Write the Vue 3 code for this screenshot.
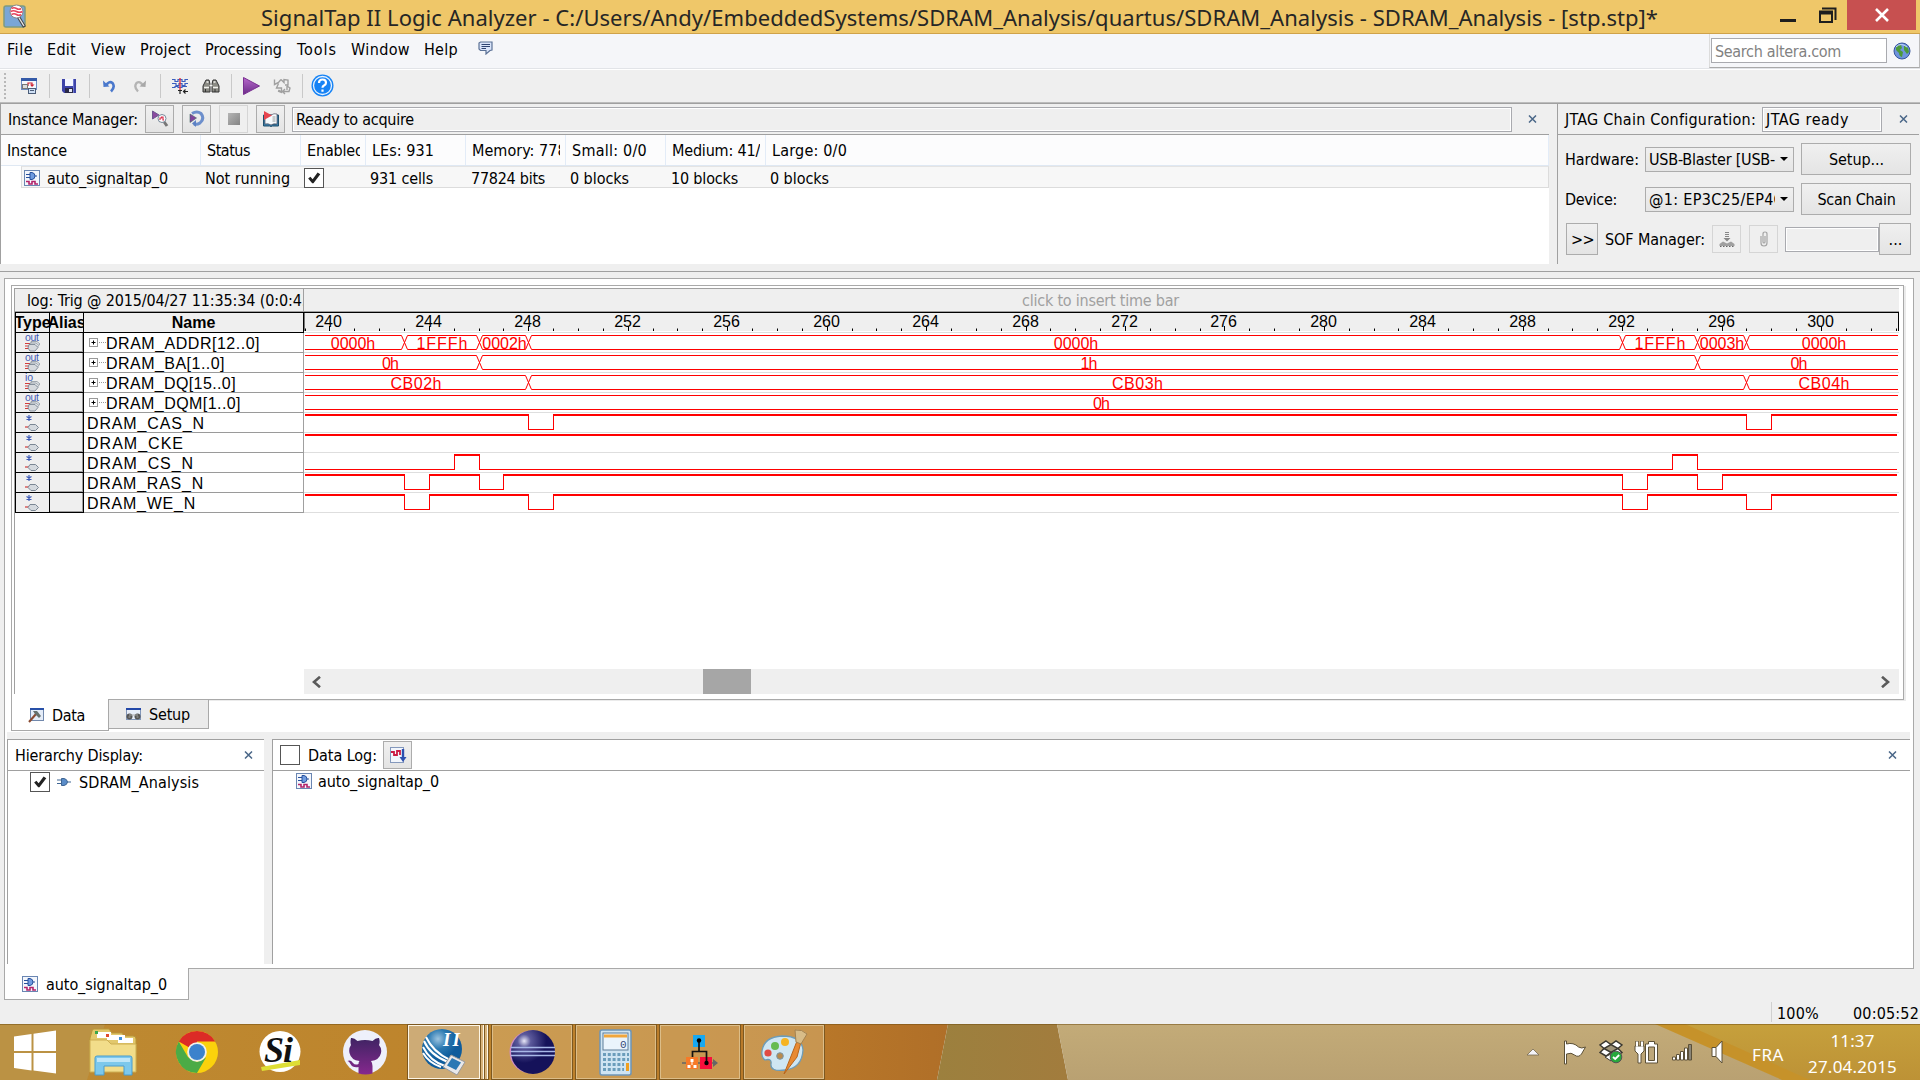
<script setup>
// Stretches or tightens the letter spacing so a label has a given drawn width.
const vFit = {
  mounted(el, { value }) {
    const natural = el.getBoundingClientRect().width
    const target = value + 2
    el.style.letterSpacing = `${(target - natural) / el.textContent.length}px`
    el.style.width = `${target}px`
  },
}

const menus = [
  ['File', 24], ['Edit', 27], ['View', 33], ['Project', 49],
  ['Processing', 75], ['Tools', 38], ['Window', 57], ['Help', 32],
]

const columns = [
  ['Instance', 59], ['Status', 42], ['Enabled', 56], ['LEs: 931', 61],
  ['Memory: 77824', 112], ['Small: 0/0', 74], ['Medium: 41/66', 105], ['Large: 0/0', 74],
]

const signals = [
  { name: 'DRAM_ADDR[12..0]', w: 152, kind: 'out', cuts: [243, 246, 248, 292, 295, 297],
    labels: [['0000h', 353], ['1FFFh', 442], ['0002h', 504.5], ['0000h', 1076], ['1FFFh', 1660], ['0003h', 1722], ['0000h', 1824]] },
  { name: 'DRAM_BA[1..0]', w: 117, kind: 'out', cuts: [246, 295],
    labels: [['0h', 390.5], ['1h', 1089], ['0h', 1799]] },
  { name: 'DRAM_DQ[15..0]', w: 128, kind: 'io', cuts: [248, 297],
    labels: [['CB02h', 416], ['CB03h', 1137.5], ['CB04h', 1824]] },
  { name: 'DRAM_DQM[1..0]', w: 133, kind: 'out', cuts: [], labels: [['0h', 1101.5]] },
  { name: 'DRAM_CAS_N', w: 116, high: true, cuts: [248, 249, 297, 298] },
  { name: 'DRAM_CKE', w: 95, high: true, cuts: [] },
  { name: 'DRAM_CS_N', w: 105, high: false, cuts: [245, 246, 294, 295] },
  { name: 'DRAM_RAS_N', w: 115, high: true, cuts: [243, 244, 246, 247, 292, 293, 295, 296] },
  { name: 'DRAM_WE_N', w: 107, high: true, cuts: [243, 244, 248, 249, 292, 293, 297, 298] },
]

const LEFT = 304
const END = 1594
const at = (t) => Math.floor(329.95 + (t - 240) * 24.86) - LEFT

const ticks = []
for (let t = 239; t <= 303; t++) ticks.push({ t, x: at(t), major: t % 4 === 0 })

const rowY = (i) => 20 + i * 20

function busPath(s, i) {
  const top = rowY(i) + 2.5
  const bot = rowY(i) + 16.5
  let d = ''
  let from = 1
  for (const c of [...s.cuts, null]) {
    const x = c === null ? END + 3 : at(c) + 0.5
    d += `M${from} ${top}H${x - 3}M${from} ${bot}H${x - 3}`
    if (c !== null) d += `M${x - 3} ${top}L${x + 3} ${bot}M${x - 3} ${bot}L${x + 3} ${top}`
    from = x + 3
  }
  return d
}

function bitPaths(s, i) {
  let level = s.high
  let from = 1
  let hi = ''
  let lo = ''
  for (const c of [...s.cuts, null]) {
    const x = c === null ? END - 1 : at(c)
    if (level) hi += `M${from} ${rowY(i) + 2}H${x + (c === null ? 0 : 1)}`
    else lo += `M${from} ${rowY(i) + 16.5}H${x}`
    if (c !== null) lo += `M${x + 0.5} ${rowY(i) + 2}V${rowY(i) + 17}`
    from = x
    level = !level
  }
  return { hi, lo }
}

const waves = signals.map((s, i) => (s.kind ? { bus: busPath(s, i) } : bitPaths(s, i)))
const labelWidth = { 2: 17, 5: 44.5 }
const widthOf = (txt) => (/[CF]/.test(txt) ? 51 : labelWidth[txt.length])
</script>

<template>
  <div class="screen">
    <svg class="defs" width="0" height="0">
      <symbol id="tap" viewBox="0 0 16 16">
        <rect x=".5" y=".5" width="15" height="15" fill="#f3f6fc" stroke="#6a86b2" />
        <path d="M2 4.500h4M2 7.500h4M10 6h3" stroke="#27509c" />
        <path d="M6 2.500h2q3 .5 3 3.500T8 9.500H6z" fill="#6f9be0" stroke="#27509c" />
        <path d="M2 11.500h3v2.500h3v-2.500h3v2.500h3" fill="none" stroke="#b3246a" stroke-width="1.600" />
      </symbol>
      <symbol id="cross" viewBox="0 0 9 8">
        <path d="M1 .5 8 7.500M8 .5 1 7.500" stroke="#4a6788" stroke-width="1.500" />
      </symbol>
      <symbol id="check" viewBox="0 0 20 20">
        <path d="M3.500 10.500 6 8.500 8.500 11.500 14 4l3 1.700-7.600 10.200H8z" fill="#222" />
      </symbol>
      <symbol id="pin" viewBox="0 0 18 16">
        <path d="M1 10h4" stroke="#d23a3a" stroke-width="1.200" />
        <path d="M6 7.500h5.500l3 3-3 3H7l-3-3z" fill="#d4d9de" stroke="#7b8794" />
      </symbol>
      <symbol id="bus" viewBox="0 0 18 18">
        <path d="M1 9.500h5M1 12h4M1 14.500h4" stroke="#d23a3a" />
        <path d="M7 7.500h6l3 2.500-3 3H8z" fill="#e2e5e8" stroke="#8c959f" stroke-width=".8" />
        <path d="M6 9h6l3 2.500-3 3H7z" fill="#e2e5e8" stroke="#8c959f" stroke-width=".8" />
        <path d="M5 10.500h6l3 3-3 3.500H6l-2-3z" fill="#d6dade" stroke="#7b8794" stroke-width=".9" />
      </symbol>
    </svg>

    <header class="title">
      <svg class="appicon" width="24" height="26" viewBox="0 0 24 26">
        <rect x="1" y="2" width="21" height="21" rx="2" fill="#7aa6d6" stroke="#7f9a80" stroke-width="1.500" />
        <path d="m15.500 13 6 10" stroke="#444" stroke-width="3.400" /><path d="m15.500 13 5.500 9" stroke="#e8e8e8" stroke-width="1.400" />
        <circle cx="13.500" cy="7.500" r="6.500" fill="#fff" stroke="#888" />
        <path d="M8.500 4.500q2.500-1.500 5 0t4.500 0M7.500 7.500q3-1.500 6 0t6 0M8.500 10.500q2.500-1.500 5 0t4.500 0" fill="none" stroke="#e5455d" stroke-width="1.600" />
      </svg>
      <span v-fit="1395" class="caption">SignalTap II Logic Analyzer - C:/Users/Andy/EmbeddedSystems/SDRAM_Analysis/quartus/SDRAM_Analysis - SDRAM_Analysis - [stp.stp]*</span>
      <svg class="winbtn" width="60" height="30" viewBox="0 0 60 30">
        <path d="M2 20.500h16" stroke="#1e1e1e" stroke-width="3" />
        <path d="M44 8.500h13.500V20" fill="none" stroke="#1e1e1e" stroke-width="2" />
        <path d="M42 13v9h12v-9z" fill="none" stroke="#1e1e1e" stroke-width="2" />
        <path d="M41 12.500h14" stroke="#1e1e1e" stroke-width="4" />
      </svg>
      <span class="closewin">
        <svg width="16" height="14" viewBox="0 0 16 14"><path d="M2 1l12 12M14 1 2 13" stroke="#fff" stroke-width="2.600" /></svg>
      </span>
    </header>

    <nav class="menu">
      <span v-for="m in menus" :key="m[0]" v-fit="m[1]" class="t">{{ m[0] }}</span>
      <svg class="bubble" width="15" height="14" viewBox="0 0 15 14">
        <path d="M2.500 1h11.500v8l-2 .5-4 3.500V9.500H2.500L1 8V2z" fill="#d9e4fa" stroke="#5c7296" stroke-width="1.200" />
        <path d="M3.500 3.500H12M3.500 5.500H12M3.500 7.500H8" stroke="#2d4370" />
      </svg>
      <div class="searchbox">
        <div class="field search"><span v-fit="125" class="t">Search altera.com</span></div>
        <svg width="18" height="18" viewBox="0 0 18 18">
          <circle cx="9" cy="9" r="8" fill="#6e94dc" stroke="#35549c" />
          <path d="M3 5q3-3 5-2l1 3-2 2 3 2-1 5q-3-1-3-4L3 8zM11 3l4 3 1 4-2 2-3-4z" fill="#4c9a3a" />
          <path d="M3 5q5-5 11 0" stroke="#c7dbff" fill="none" />
        </svg>
      </div>
    </nav>

    <div class="toolbar">
      <i class="grip"></i>
      <svg width="18" height="18" viewBox="0 0 18 18">
        <rect x="1.500" y="1.500" width="15" height="11" fill="#f5f8fd" stroke="#6f8cc4" />
        <path d="M1 2.500h16" stroke="#345aa8" stroke-width="3" />
        <path d="M8 9V6h4v3" fill="none" stroke="#d02030" stroke-width="1.200" /><path d="m10 7.500 2 2.500L14.500 7.500z" fill="#d02030" />
        <rect x="2.500" y="7.500" width="5" height="4" fill="#ddd" stroke="#777" />
        <rect x="8.500" y="11.500" width="7" height="5" fill="#cfe0f5" stroke="#4b5d78" /><path d="M10 13.500h4" stroke="#4b5d78" />
      </svg>
      <i class="sep"></i>
      <svg width="16" height="16" viewBox="0 0 16 16">
        <path d="M1 1h14v14H3l-2-2z" fill="#3e44a8" />
        <rect x="4" y="1" width="8" height="7" fill="#f4f6ff" /><rect x="4" y="10" width="8" height="5" fill="#2a2a48" /><rect x="8" y="11" width="3" height="3" fill="#e6e8f6" />
        <path d="M12.500 1v14" stroke="#6d78d0" />
      </svg>
      <i class="sep"></i>
      <svg width="14" height="14" viewBox="0 0 14 14">
        <path d="M4 6.500q3-5 6.500-2.500 3 4-1.500 8.500" fill="none" stroke="#4a78cc" stroke-width="2.600" /><path d="M1 1.500 1.500 8l6-.5z" fill="#4a78cc" />
      </svg>
      <svg width="14" height="14" viewBox="0 0 14 14">
        <path d="M10 6.500q-3-5-6.500-2.500-3 4 1.500 8.500" fill="none" stroke="#b4b4b4" stroke-width="2.300" /><path d="M13 1.500 12.500 8l-6-.5z" fill="#a8a8a8" />
      </svg>
      <i class="sep"></i>
      <svg width="18" height="18" viewBox="0 0 18 18">
        <path d="M1 2.500h3v2h3v-2h4v2h3v-2h3M1 6.500h4v2h3v-2h3v2h3v-2h3M1 10.500h3v-1h3v1h4v-1h5" fill="none" stroke="#3a5ec0" stroke-width="1.200" />
        <path d="M9 1v12" stroke="#e03040" stroke-width="1.400" />
        <path d="M7 13.500h4M9 13v4M12.500 14.500H17M14.500 12.500l-2 2 2 2" stroke="#222" fill="none" stroke-width="1.200" />
      </svg>
      <svg width="18" height="18" viewBox="0 0 18 18">
        <path d="M4 3h3l1 4v8H1V9zM11 3h3l3 6v6h-7V7z" fill="#8b8b84" stroke="#333" />
        <path d="M2 10.500h5M11 10.500h5M4.500 5h2M11.500 5h2M7.500 8.500h3" stroke="#f2f2ee" stroke-width="1.500" /><path d="M3.500 12v3M13 12v3" stroke="#333" />
      </svg>
      <i class="sep"></i>
      <svg width="18" height="20" viewBox="0 0 18 20">
        <path d="M1.500 1.500v17L17.500 10z" fill="url(#play)" stroke="#7a2f92" />
        <linearGradient id="play" x2="0" y2="1"><stop stop-color="#b868cc" /><stop offset="1" stop-color="#6a2c88" /></linearGradient>
      </svg>
      <svg width="18" height="18" viewBox="0 0 18 18" fill="none" stroke="#a0a0a0" stroke-width="1.400">
        <path d="M1.500 2.500v5l4-2 2.500-3M8 2.500l3 3v-3l4 .5v5h-3M5.500 6.500l-2 4.500h5v4l-3-2M9 15.500 5 14M10 14.500h6l1-3.500-3-2M12 12l-2.500 2.500L12 17M14 9v4" />
      </svg>
      <i class="sep"></i>
      <svg width="23" height="23" viewBox="0 0 23 23">
        <circle cx="11.500" cy="11.500" r="11" fill="#1683f5" /><circle cx="11.500" cy="11.500" r="9" fill="none" stroke="#e8f3ff" stroke-width="1.300" />
        <path d="M8 9q0-3.500 3.500-3.500T15 8.800Q15 10.500 13 11.500q-1.500.8-1.500 2.200M11.500 15.500v2.200" fill="none" stroke="#fff" stroke-width="2.200" />
      </svg>
    </div>

    <div class="docks">
      <section class="dock instance">
        <div class="head ihead">
          <span v-fit="129" class="t">Instance Manager:</span>
          <b class="btn"><svg width="18" height="18" viewBox="0 0 18 18">
            <path d="M1.500 1v8L8 5z" fill="#8c4aa0" stroke="#6d5590" /><path d="m12.500 11 3.500 5" stroke="#777" stroke-width="3" /><circle cx="11" cy="8.500" r="4" fill="#fff" stroke="#789" /><path d="M9 10V8h1.500V7H12v3h1" fill="none" stroke="#d8304c" stroke-width="1.200" />
          </svg></b>
          <b class="btn"><svg width="18" height="18" viewBox="0 0 18 18">
            <path d="M4 3.500q5-3 9 0 4 5-1 9.500-3 2-6 1" fill="none" stroke="#6d8fcc" stroke-width="3" /><path d="m8 10-4 3.500L8 17z" fill="#5b80c4" /><path d="M2 4v8.500L8.500 8z" fill="#83439c" stroke="#466" stroke-width=".6" />
          </svg></b>
          <b class="btn off"><i class="stop"></i></b>
          <b class="btn"><svg width="18" height="18" viewBox="0 0 18 18">
            <path d="M1.500 5v11h6q1.500 0 1.500 1 0-1 1.500-1h6V5h-2v9H10V5z" fill="#3a7ca8" stroke="#20506e" /><path d="M9 5q3-2 6-1v10q-3-1-6 1-3-2-6-1V5q3-1 6 0z" fill="#f5fafd" stroke="#556" stroke-width=".7" /><path d="M10.500 7h3M10.500 9h3M10.500 11h3" stroke="#999" /><path d="M2 1v9l8-4.500z" fill="#e8454f" />
          </svg></b>
          <div class="field ready"><span v-fit="117" class="t">Ready to acquire</span></div>
          <svg class="x" width="9" height="8"><use href="#cross" /></svg>
        </div>
        <div class="cols">
          <div v-for="c in columns" :key="c[0]" class="col"><span><span v-fit="c[1]" class="t">{{ c[0] }}</span></span></div>
        </div>
        <div class="irow">
          <svg width="16" height="16"><use href="#tap" /></svg>
          <span v-fit="120" class="t">auto_signaltap_0</span>
          <span v-fit="84" class="t">Not running</span>
          <i class="box"><svg width="18" height="18"><use href="#check" /></svg></i>
          <span v-fit="62" class="t">931 cells</span>
          <span v-fit="73" class="t">77824 bits</span>
          <span v-fit="58" class="t">0 blocks</span>
          <span v-fit="66" class="t">10 blocks</span>
          <span v-fit="58" class="t">0 blocks</span>
        </div>
      </section>

      <section class="dock jtag">
        <div class="head jhead">
          <span v-fit="190" class="t">JTAG Chain Configuration:</span>
          <div class="field"><span v-fit="82" class="t">JTAG ready</span></div>
          <svg class="x" width="9" height="8"><use href="#cross" /></svg>
        </div>
        <div class="jrow">
          <span v-fit="73" class="t">Hardware:</span>
          <div class="select"><p><span v-fit="125" class="t">USB-Blaster [USB-</span></p><i></i></div>
          <b class="btn wide"><span v-fit="54" class="t">Setup...</span></b>
        </div>
        <div class="jrow">
          <span v-fit="51" class="t">Device:</span>
          <div class="select"><p><span v-fit="134" class="t">@1: EP3C25/EP4C</span></p><i></i></div>
          <b class="btn wide"><span v-fit="77" class="t">Scan Chain</span></b>
        </div>
        <div class="jrow sof">
          <b class="btn wide"><span v-fit="22" class="t">&gt;&gt;</span></b>
          <span v-fit="99" class="t">SOF Manager:</span>
          <b class="btn off"><svg width="18" height="18" viewBox="0 0 18 18">
            <path d="M7 2.500h4M7 4.500h4M7 6.500h4" stroke="#888" /><path d="M5.500 8h7L9 11.500z" fill="#888" /><path d="M5 11.500 1.500 14v2h15v-2L13 11.500l-4 2z" fill="#a0a0a0" /><path d="M2 16.500h14" stroke="#666" stroke-dasharray="1.500 1.500" />
          </svg></b>
          <b class="btn off"><svg width="10" height="16" viewBox="0 0 10 16"><path d="M2 5v7q0 3 3 3t3-3V3q0-2-2-2T4 3v8q0 1 1 1t1-1V5" fill="none" stroke="#a4a4a4" stroke-width="1.200" /></svg></b>
          <div class="field"></div>
          <b class="btn wide"><span v-fit="13" class="t">...</span></b>
        </div>
      </section>
    </div>

    <div class="rule"></div>

    <main class="mdi">
      <section class="tabpage">
        <div class="view">
          <div class="logbar">
            <div class="log"><span v-fit="287" class="t">log: Trig @ 2015/04/27 11:35:34 (0:0:4.0 </span></div>
            <div class="insert"><span v-fit="156" class="t">click to insert time bar</span></div>
          </div>
          <div class="grid">
            <div class="names">
              <div class="nrow nhead"><div>Type</div><div>Alias</div><div>Name</div></div>
              <div v-for="s in signals" :key="s.name" class="nrow">
                <div class="type">
                  <svg v-if="s.kind" width="18" height="19" viewBox="0 0 18 19">
                    <text x="1" y="8" font-size="10.500" fill="#3f5bb5" :textLength="s.kind === 'io' ? 8 : 14">{{ s.kind }}</text>
                    <use href="#bus" y="1" width="18" height="18" />
                  </svg>
                  <svg v-else width="18" height="19" viewBox="0 0 18 19">
                    <path d="M5 2v6M2.500 3.500l5 3M7.500 3.500l-5 3" stroke="#3f5bb5" stroke-width="1.200" />
                    <use href="#pin" y="4" width="18" height="16" />
                  </svg>
                </div>
                <div class="alias"></div>
                <div class="name">
                  <svg v-if="s.kind" width="17" height="9" viewBox="0 0 17 9">
                    <rect x=".5" y=".5" width="8" height="8" fill="#fff" stroke="#999" /><path d="M2.500 4.500h4M4.500 2.500v4" stroke="#000" /><path d="M10 4.500h7" stroke="#999" stroke-dasharray="1 1" />
                  </svg>
                  <span v-fit="s.w" class="sig">{{ s.name }}</span>
                </div>
              </div>
            </div>
            <svg class="wave" width="1595" height="200" viewBox="0 0 1595 200">
              <rect width="1595" height="18" fill="#efefef" />
              <path d="M0 0V18M1594.500 0V18" stroke="#000" />
              <path v-for="t in ticks" :key="t.t" :d="`M${t.x + 0.5} ${t.major ? 13 : 15.500}V18`" stroke="#000" />
              <text v-for="t in ticks.filter((k) => k.major)" :key="'l' + t.t" :x="t.x - 0.5" y="14" class="tick">{{ t.t }}</text>
              <path v-for="n in 10" :key="'g' + n" :d="`M0 ${n * 20 - 0.5}H1595`" stroke="#dedede" />
              <g fill="none" stroke="#f00">
                <template v-for="(w, i) in waves" :key="i">
                  <path v-if="w.bus" :d="w.bus" />
                  <template v-else><path :d="w.hi" stroke-width="2" /><path :d="w.lo" /></template>
                </template>
              </g>
              <template v-for="(s, i) in signals" :key="s.name">
                <text v-for="(l, j) in s.labels || []" :key="j" :x="l[1] - LEFT" :y="rowY(i) + 16" class="val" :textLength="widthOf(l[0])">{{ l[0] }}</text>
              </template>
            </svg>
          </div>
          <div class="scroll">
            <svg width="11" height="12" viewBox="0 0 11 12"><path d="M9 .8 3 6l6 5.200" fill="none" stroke="#5a5a5a" stroke-width="2.600" /></svg>
            <i></i>
            <svg width="11" height="12" viewBox="0 0 11 12"><path d="M2 .8 8 6l-6 5.200" fill="none" stroke="#5a5a5a" stroke-width="2.600" /></svg>
          </div>
        </div>
      </section>
      <div class="tabs">
        <div class="tab on">
          <svg width="16" height="16" viewBox="0 0 16 16"><rect x="2.500" y="1.500" width="13" height="12" fill="#e4ecf8" stroke="#7188ac" /><path d="M2 2h14" stroke="#2850a8" stroke-width="2" /><path d="m1 15 7-8" stroke="#8a4a30" stroke-width="2" /><path d="M5 4h4l4 5-2 2-4-4z" fill="#65706c" /></svg>
          <span v-fit="32" class="t">Data</span>
        </div>
        <div class="tab">
          <svg width="17" height="14" viewBox="0 0 17 14"><rect x="1.500" y="1.500" width="14" height="11" fill="#e8eefa" stroke="#8296b8" /><path d="M1 2h15" stroke="#2348a8" stroke-width="2" /><circle cx="4.500" cy="9.500" r="3" fill="#555" /><circle cx="12.500" cy="9.500" r="3" fill="#555" /><path d="M4 8h9M3.500 10h2M11.500 10h2" stroke="#aaa" /></svg>
          <span v-fit="40" class="t">Setup</span>
        </div>
      </div>
      <div class="lower">
        <section class="pane hier">
          <div class="phead"><span v-fit="127" class="t">Hierarchy Display:</span><svg class="x" width="9" height="8"><use href="#cross" /></svg></div>
          <div class="tree">
            <i class="box"><svg width="18" height="18"><use href="#check" /></svg></i>
            <svg width="14" height="10" viewBox="0 0 14 10"><path d="M0 3h5M0 6.500h5M9 5h5" stroke="#3f6694" stroke-width="1.200" /><path d="M4.500 1.500H7Q10 2 10.500 5 10 8 7 8.500H4.500z" fill="#5a8cc8" stroke="#3f6694" /></svg>
            <span v-fit="119" class="t">SDRAM_Analysis</span>
          </div>
        </section>
        <section class="pane dlog">
          <div class="phead">
            <i class="box"></i><span v-fit="68" class="t">Data Log:</span>
            <b class="btn"><svg width="18" height="18" viewBox="0 0 18 18"><rect x="1.500" y="1.500" width="13" height="15" fill="#f2f6fc" stroke="#8498bc" /><path d="M2 6h3v3h3V5h3v4" fill="none" stroke="#cc1c44" stroke-width="1.800" /><path d="M14 3v9" stroke="#2c50b0" stroke-width="2.400" /><path d="M10.500 11h7L14 16z" fill="#2c50b0" /></svg></b>
            <svg class="x" width="9" height="8"><use href="#cross" /></svg>
          </div>
          <div class="tree"><svg width="16" height="16"><use href="#tap" /></svg><span v-fit="120" class="t">auto_signaltap_0</span></div>
        </section>
      </div>
    </main>
    <div class="doctab"><svg width="16" height="16"><use href="#tap" /></svg><span v-fit="120" class="t">auto_signaltap_0</span></div>
    <div class="status"><i></i><span v-fit="41" class="t">100%</span><span v-fit="65" class="t">00:05:52</span></div>

    <footer class="taskbar">
      <svg class="wall" width="1920" height="56" viewBox="0 0 1920 56">
        <defs>
          <linearGradient id="w1"><stop stop-color="#bd8a32" /><stop offset=".5" stop-color="#be842c" /><stop offset=".85" stop-color="#b97829" /><stop offset="1" stop-color="#b06f28" /></linearGradient>
          <linearGradient id="w2"><stop stop-color="#9c803e" /><stop offset="1" stop-color="#a27c3d" /></linearGradient>
          <linearGradient id="w3" x2="0" y2="1"><stop stop-color="#c3ab78" /><stop offset="1" stop-color="#b9a172" /></linearGradient>
          <linearGradient id="w4" x2="0" y2="1"><stop stop-color="#c6a03c" /><stop offset="1" stop-color="#bd9236" /></linearGradient>
        </defs>
        <path d="M0 0H948L937 56H0z" fill="url(#w1)" />
        <path d="M0 0H105L87 56H0z" fill="#bb9244" />
        <path d="M948 0h109l11 56H937z" fill="url(#w2)" />
        <path d="M1057 0h600l127 56H1068z" fill="url(#w3)" />
        <path d="M1655 0h265v56h-138z" fill="#c6922a" />
        <path d="M1685 0h235v56h-110z" fill="url(#w4)" />
        <path d="M0 .5H1920" stroke="#6e4c10" stroke-opacity=".5" />
      </svg>
      <svg class="ic" width="44" height="44" viewBox="0 0 44 44"><path d="M1 6.500 18.500 4v17H1zM20.500 3.700 43 .5V21H20.500zM1 23h17.500v17.500L1 38zM20.500 23H43v20.500l-22.500-3z" fill="#fff" /></svg>
      <svg class="ic" width="48" height="48" viewBox="0 0 48 48">
        <path d="M3 3q0-2 2-2h15l3 4h10l2 3h9q3 0 3 3v31H1V10z" fill="#e2c86c" stroke="#b8963a" />
        <path d="M8 4h14v6H8zM18 7h18v5H18zM29 10h15v5H29z" fill="#fff" /><path d="M6 3h3v3H6z" fill="#3aa64a" /><path d="M17 6h3v3h-3z" fill="#e04b30" /><path d="M30 9h3v3h-3z" fill="#3d8fd8" />
        <path d="M1 12h17l4 4h25v28H1z" fill="#f2dd8a" stroke="#cdae52" />
        <path d="M6 30q0-2 2-2h33q2 0 2 2v17h-8v-9H15v9H6z" fill="#7cc8ec" stroke="#4a9ccc" /><path d="M8 30h33v4H8z" fill="#bfe6f8" />
      </svg>
      <svg class="ic" width="44" height="44" viewBox="0 0 44 44">
        <circle cx="22" cy="22" r="21" fill="#fbd20c" />
        <path d="M22 22 3.800 11.500A21 21 0 0 1 40.200 11.500H22z" fill="#dc2b26" />
        <path d="M3.800 11.500A21 21 0 0 0 22 43l9-15.600L22 32 13 27.200z" fill="#4bab46" />
        <circle cx="22" cy="22" r="9.800" fill="#f1f1ea" /><circle cx="22" cy="22" r="8" fill="#3b82cc" />
      </svg>
      <svg class="ic" width="44" height="44" viewBox="0 0 44 44">
        <circle cx="22" cy="21.500" r="20.500" fill="#fff" />
        <path d="M3 37 42 30v5L4 41z" fill="#dede35" />
        <text x="6" y="32" font-family="Liberation Serif, serif" font-style="italic" font-weight="700" font-size="36" fill="#111" textLength="29">Si</text>
      </svg>
      <svg class="ic" width="46" height="46" viewBox="0 0 46 46">
        <circle cx="23" cy="23" r="22" fill="#eef0fb" />
        <path d="M9 9q3-.5 6.500 3 7.500-2 15 0Q34 8.500 37 9q1.300 4 0 7 3 3.500 2 8-1.500 7-10 8 1.500 2 1.500 5v7.500q-7 2-14 0V38q-6 1-8-3-1.500-3-3-3 3-1.500 5.500 2 2 2.500 5.500 1 0-2 1-3-8.500-1-10-8-1-4.500 1.500-8Q8 13 9 9z" fill="url(#cat)" />
        <linearGradient id="cat" x2="0" y2="1"><stop stop-color="#3f2463" /><stop offset="1" stop-color="#86288e" /></linearGradient>
      </svg>
      <div class="task active">
        <svg width="46" height="48" viewBox="0 0 46 48">
          <defs><radialGradient id="q" cx=".4" cy=".25"><stop stop-color="#9cc4e0" /><stop offset=".5" stop-color="#2a78b0" /><stop offset="1" stop-color="#0e5c9c" /></radialGradient></defs>
          <circle cx="21" cy="21" r="20" fill="url(#q)" />
          <path d="M3 13q6 14 24 21M5 9q7 15 24 23M2 19q7 14 22 19M2 25q6 10 18 14" fill="none" stroke="#fff" stroke-width="2" />
          <path d="m30 27 14 7-8 13-14-8z" fill="#e8e8ea" stroke="#999" /><path d="m31 30 9 4.500-5 7.500-9-4.500z" fill="#2a78b4" />
          <text x="22" y="18" font-family="Liberation Serif, serif" font-style="italic" font-weight="700" font-size="19" fill="#fff" textLength="17">II</text>
        </svg>
      </div>
      <i class="stack"></i><i class="stack"></i>
      <div class="task">
        <svg width="46" height="46" viewBox="0 0 46 46">
          <defs><radialGradient id="e" cx=".3" cy=".25"><stop stop-color="#e8e8f8" /><stop offset=".3" stop-color="#5c5a9c" /><stop offset="1" stop-color="#15125a" /></radialGradient></defs>
          <circle cx="22" cy="23" r="21.500" fill="#d08cc0" /><circle cx="24" cy="23" r="22" fill="url(#e)" />
          <path d="M2 18.500h44M2 22.500h44M2 26.500h44" stroke="#a8b8e8" stroke-width="1.300" />
        </svg>
      </div>
      <div class="task">
        <svg width="34" height="47" viewBox="0 0 34 47">
          <rect x="1" y="1" width="31" height="45" rx="2" fill="#cfe4f2" stroke="#6d95b8" stroke-width="1.500" />
          <rect x="4" y="4" width="25" height="17" fill="#eaf4fc" stroke="#5c7c98" /><path d="M5 7h23" stroke="#f0a63c" stroke-width="3" />
          <text x="21" y="19" font-family="Liberation Mono, monospace" font-size="11" fill="#334a78">0</text>
          <path d="M4 25.500h26M4 30.500h26M4 35.500h21M4 40.500h21" stroke="#6b9dbb" stroke-width="3" stroke-dasharray="3 1.800" /><path d="M28.500 34v8" stroke="#f0a020" stroke-width="3" />
        </svg>
      </div>
      <div class="task">
        <svg width="36" height="36" viewBox="0 0 36 36">
          <path d="M0 29h32" stroke="#666" stroke-width="1.500" /><path d="m31 25 5 4-5 4z" fill="#666" />
          <path d="M11 1h12v12H11z" fill="#18a8f0" /><path d="M4 23h12v12H4z" fill="#f77a28" /><path d="M18 23h12v12H18z" fill="#f8103c" />
          <path d="M17 7v10.500M10.500 23v-5.500h14V29" fill="none" stroke="#111" stroke-width="1.700" /><circle cx="17" cy="6.500" r="2.200" /><circle cx="24.500" cy="29" r="2.200" />
          <path d="M8.500 25h3v3h-3zM5.500 31h3v3h-3zM11.500 31h3v3h-3zM9.500 28h1v3h-1z" fill="#fff" />
        </svg>
      </div>
      <div class="task">
        <svg width="48" height="46" viewBox="0 0 48 46">
          <path d="M2 22Q4 8 22 7q20 0 21 14-1 18-18 20-15 2-14-6 1-6-6-4-4-3-3-9z" fill="#cfe6f2" stroke="#6d9cb8" stroke-width="1.300" />
          <circle cx="20" cy="27" r="3.300" fill="#b98a4c" stroke="#7896a8" /><circle cx="8" cy="24" r="3.600" fill="#e04c44" /><circle cx="15" cy="17" r="4" fill="#66bb50" /><circle cx="25" cy="13" r="4" fill="#f6b422" />
          <path d="M37 12 24 45l13-17 4-15z" fill="#e88a32" stroke="#b8651c" /><path d="m36 13 5 2 6-10q-5-5-12-4z" fill="#d8bc88" stroke="#a48250" />
        </svg>
      </div>
      <div class="tray">
        <svg width="14" height="8" viewBox="0 0 14 8"><path d="M7 1 13 7H1z" fill="#f4f4f8" stroke="#776a50" stroke-width=".8" /></svg>
        <svg width="24" height="25" viewBox="0 0 24 25"><path d="M1.500 1v23h2V14q5-2 8 1 4 3 7-1l4-7q-4 2-7 0-5-5-12-3V1z" fill="#fff" stroke="#5c5138" /></svg>
        <svg width="24" height="24" viewBox="0 0 24 24"><path d="m7 1 5 3.500L17 1l6 4-4 3.500 4 4L17 16l-5-3.500L7 16l-6-3.500 4-4L1 5z" fill="#fff" stroke="#3b3830" stroke-width="1.500" /><path d="m5 8.500 7 4 7-4-7-4z" fill="#a09478" stroke="#3b3830" stroke-width="1.500" /><path d="m6 17 6-3 5 3-5 4z" fill="#fff" stroke="#3b3830" /><circle cx="17" cy="17" r="5.800" fill="#27a83c" stroke="#555" /><path d="m14 17 2.200 2 4-4" stroke="#fff" stroke-width="1.800" fill="none" /></svg>
        <svg width="25" height="24" viewBox="0 0 25 24"><path d="M3 1v5M8 1v5" stroke="#5c5138" stroke-width="3.400" /><path d="M1 6h9v5l-3 3v9H4v-9l-3-3zM11.500 4h3V1.500h6V4h3v19h-12z" fill="#fff" stroke="#5c5138" /><path d="M3 1.500v5M8 1.500v5" stroke="#fff" stroke-width="2" /><path d="M14.500 7h6v13.500h-6z" fill="#bda77a" stroke="#5c5138" /></svg>
        <svg width="22" height="18" viewBox="0 0 22 18"><path d="M1.500 14h3v3h-3zM5.500 11.500h3V17h-3zM9.500 8.500h3V17h-3zM13.500 5h3v12h-3z" fill="#fff" stroke="#5c5138" /><path d="M17.500 1.500h3V17h-3z" fill="#8a8578" stroke="#5c5138" /></svg>
        <svg width="13" height="24" viewBox="0 0 13 24"><path d="M1 7.500h4l6-6.500v22l-6-6.500H1z" fill="#fff" stroke="#5c5138" /><path d="M5 7.500v9" stroke="#5c5138" /></svg>
        <span v-fit="30" class="w">FRA</span>
        <div class="clock"><span v-fit="42" class="w">11:37</span><span v-fit="87" class="w">27.04.2015</span></div>
      </div>
    </footer>
  </div>
</template>

<style>
body { margin: 0; overflow: hidden; }
</style>

<style scoped>
* { box-sizing: border-box; }
svg { display: block; flex: none; }
.screen { width: 1920px; height: 1080px; overflow: hidden; background: #efefef; color: #000; display: flex; flex-direction: column; font: 16px/20px "DejaVu Sans Condensed", "Noto Sans", sans-serif; }
.screen > * { flex: none; }
.defs { position: absolute; }
.t, .w, .caption { display: inline-block; white-space: nowrap; justify-self: start; flex: none; }
.t { padding: 2px 0 0 1px; }
b { font-weight: normal; }
.title { height: 34px; background: #efc769; border-bottom: 1px solid #cfa24a; display: grid; grid-template-columns: 258px 1517px 69px 69px; padding-left: 3px; }
.appicon { margin-top: 4px; }
.caption { font: 22px/34px "Noto Sans", sans-serif; color: #262626; }
.closewin { height: 30px; background: #c75050; display: flex; align-items: center; justify-content: center; }
.menu { height: 36px; background: #f5f6f9; border-bottom: 1px solid #fff; box-shadow: inset 0 -1px #e2e4e8; display: grid; grid-template-columns: 40px 44px 49px 65px 92px 54px 73px 54px 1231px 211px; padding-left: 7px; }
.menu > .t { margin-top: 4px; padding-left: 0; }
.bubble { margin-top: 7px; }
.searchbox { height: 34px; border-left: 1px solid #dcdcdc; border-bottom: 1px solid #a9a9a9; border-right: 1px solid #bbb; display: flex; align-items: center; padding: 0 8px 0 1px; justify-content: space-between; }
.field { border: 1px solid #a9aaaf; box-shadow: inset 0 0 0 1px #fff; background: #efefef; height: 25px; display: flex; align-items: center; padding-left: 2px; }
.search { background: #fff; width: 176px; color: #828282; }
.toolbar { height: 34px; border-bottom: 1px solid #a0a0a0; box-shadow: inset 0 -1px #bcbcbc; display: grid; grid-template-columns: 16px 29px 12px 28px 13px 31px 27px 11px 31px 29px 11px 31px 29px 9px 1fr; align-items: center; padding-left: 4px; padding-bottom: 2px; }
.grip { width: 2px; height: 26px; background: repeating-linear-gradient(#b8b8b8 0 2px, transparent 2px 4px); }
.sep { width: 1px; height: 24px; background: #c9c9c9; }
.docks { display: flex; gap: 8px; height: 160px; }
.dock { border-left: 1px solid #a0a0a0; }
.instance { width: 1549px; background: #fff; }
.jtag { width: 362px; }
.head { height: 31px; background: #efefef; border-bottom: 1px solid #a0a0a0; display: grid; align-items: center; }
.ihead { padding-left: 6px; grid-template-columns: 138px 37px 37px 37px 36px 1236px 1fr; }
.btn { width: 29px; height: 28px; border: 1px solid #acacac; background: linear-gradient(#f0f0f0, #e4e4e4); display: flex; align-items: center; justify-content: center; flex: none; }
.off { border-color: #d5d5d5; background: #efefef; }
.stop { width: 12px; height: 12px; background: linear-gradient(135deg, #b5b5b5, #848484); }
.ready { width: 1220px; }
.cols { height: 31px; display: flex; background: #fcfcfd; border-bottom: 1px solid #dfe8f3; }
.col { width: 100px; border-right: 1px solid #e3ecf8; padding: 4px 5px 0 5px; flex: none; }
.col > span { display: block; overflow: hidden; }
.col:nth-child(1) { width: 200px; }
.col:nth-child(3) { width: 65px; }
.col:last-child { width: 783px; }
.irow { margin-left: 20px; height: 22px; border: 1px solid #dcdcdc; border-top-color: #e4e4e4; background: #f7f7f7; display: grid; grid-template-columns: 22px 158px 100px 65px 101px 99px 101px 99px 1fr; align-items: center; padding-left: 2px; }
.box { width: 20px; height: 20px; border: 1px solid #555; background: #fff; flex: none; display: block; }
.jhead { padding-left: 6px; grid-template-columns: 198px 137px 1fr; }
.jhead .field { width: 120px; }
.jrow { height: 40px; display: grid; grid-template-columns: 81px 156px 110px; align-items: center; padding-left: 6px; }
.jhead + .jrow { margin-top: 4px; }
.select { width: 149px; height: 25px; border: 1px solid #acacac; background: linear-gradient(#f0f0f0, #e5e5e5); display: flex; align-items: center; padding-left: 2px; }
.select p { margin: 0; width: 127px; height: 22px; overflow: hidden; }
.select i { margin-left: 5px; border: 4px solid transparent; border-top-color: #000; border-bottom: 0; }
.wide { width: 110px; height: 32px; }
.sof { grid-template-columns: 38px 108px 37px 36px 94px 32px; padding-left: 8px; }
.sof .wide { width: 32px; }
.rule { height: 14px; background: linear-gradient(#a0a0a0, #a0a0a0) 0 7px / 100% 1px no-repeat; }
.mdi { margin-left: 4px; width: 1910px; height: 691px; border: 1px solid #a9a9a9; background: #fff; padding-top: 6px; }
.tabpage { margin-left: 6px; width: 1893px; height: 415px; border: 1px solid #a9a9a9; box-shadow: 2px 1px #ebebeb; padding: 2px 0 0 2px; }
.view { width: 1885px; height: 406px; border: 1px solid #a0a0a0; border-width: 1px 0 0 1px; display: flex; flex-direction: column; }
.logbar { height: 24px; background: #efefef; border-bottom: 1px solid #000; box-shadow: inset 0 -1px #a0a0a0; display: flex; }
.log { width: 289px; border-right: 1px solid #a0a0a0; padding: 0 0 0 11px; overflow: hidden; }
.insert { flex: 1; color: #a0a0a0; padding: 0 0 0 717px; }
.grid { display: flex; font-family: "Liberation Sans", Arial, sans-serif; }
.names { width: 289px; }
.nrow { height: 20px; display: flex; }
.nrow > div { flex: none; overflow: hidden; border-bottom: 1px solid #000; }
.nrow > div:nth-child(1) { width: 35px; border-left: 1px solid #000; border-right: 1px solid #000; background: #efefef; }
.nrow > div:nth-child(2) { width: 34px; border-right: 1px solid #000; background: #efefef; }
.nrow > div:nth-child(3) { width: 220px; border-right: 1px solid #a0a0a0; }
.nhead > div { font-weight: bold; text-align: center; background: #efefef; line-height: 20px; display: flex; justify-content: center; }
.nhead > div:nth-child(3) { border-right-color: #000; }
.nrow > .alias { box-shadow: inset -1px -1px #a0a0a0; }
.nrow > .type { padding-left: 8px; }
.nrow > .name { display: flex; align-items: center; border-bottom: 1px solid #9a9a9a; padding: 0 0 0 3px; white-space: nowrap; }
.name svg { margin: 0 0 0 2px; }
.sig { padding-top: 2px; }
.tick { font-size: 16px; text-anchor: middle; }
.val { font-size: 16px; text-anchor: middle; fill: #f00; }
.scroll { margin: auto 0 0 289px; height: 25px; background: #efefef; display: flex; align-items: center; justify-content: space-between; padding: 0 8px 0 7px; }
.scroll i { width: 48px; height: 25px; background: #a6a6a6; margin-right: 742px; margin-left: -6px; }
.tabs { margin: -1px 0 0 6px; height: 32px; display: flex; position: relative; }
.tab { width: 102px; height: 30px; border: 1px solid #a9a9a9; background: #ebebeb; margin-left: -1px; display: flex; align-items: center; padding-left: 16px; gap: 6px; }
.tab:last-child { width: 101px; }
.tab.on { width: 98px; height: 32px; border-top: 0; background: #fff; margin: 0; padding-left: 16px; gap: 7px; }
.lower { margin: 1px 0 0 2px; width: 1903px; height: 232px; border-top: 7px solid #efefef; display: flex; }
.pane { border: 1px solid #a0a0a0; border-width: 1px 0 0 1px; }
.hier { width: 257px; }
.dlog { flex: 1; }
.hier + .dlog { box-shadow: -8px 0 #efefef; margin-left: 8px; }
.phead { height: 31px; border-bottom: 1px solid #a0a0a0; display: flex; align-items: center; }
.phead .x { margin-left: auto; margin-right: 11px; }
.hier .phead { padding-left: 6px; }
.dlog .phead { padding-left: 7px; }
.dlog .phead .t { margin: 0 6px 0 7px; }
.tree { display: flex; align-items: center; height: 22px; }
.hier .tree { padding-left: 22px; }
.hier .tree svg { margin-right: 7px; }
.hier .tree .box { margin-right: 7px; }
.dlog .tree { padding-left: 23px; gap: 5px; height: 20px; }
.dlog .x { margin-right: 13px; }
.doctab { margin: -1px 0 0 4px; width: 185px; height: 32px; background: #fff; border: 1px solid #a9a9a9; border-top: 0; display: flex; align-items: center; padding-left: 17px; gap: 7px; position: relative; }
.status { height: 24px; display: grid; grid-template-columns: 5px 76px 68px; justify-content: end; align-items: center; }
.status i { width: 1px; height: 20px; background: #d0d0d0; }
.status .t { margin-top: 2px; }
.taskbar { height: 56px; position: relative; display: flex; align-items: center; padding-left: 13px; }
.wall { position: absolute; left: 0; top: 0; }
.taskbar > * { flex: none; }
.ic { position: relative; }
.ic:nth-of-type(3) { margin-left: 32px; }
.ic:nth-of-type(4) { margin-left: 38px; }
.ic:nth-of-type(5) { margin-left: 39px; }
.ic:nth-of-type(6) { margin-left: 40px; }
.task { position: relative; width: 82px; height: 56px; margin-left: 2px; border: 1px solid #7d5820; box-shadow: inset 0 0 0 1px #dcbd88; background: rgba(215, 180, 120, .5); display: flex; align-items: center; justify-content: center; }
.task.active { width: 74px; margin-left: 19px; background: #cdab76; box-shadow: inset 0 0 0 1px #fdf6e6; }
.stack { position: relative; width: 4px; height: 56px; border: 1px solid #7d5820; border-left: 0; background: #d8b47c; box-shadow: inset -1px 0 #fdf6e6; }
.tray { position: absolute; left: 1526px; top: 0; height: 56px; display: grid; grid-template-columns: 37px 36px 35px 37px 40px 41px 56px 100px; align-items: center; }
.w { color: #fff; font: 17px/24px "Noto Sans", sans-serif; }
.tray > .w { margin-top: 5px; }
.clock { width: 89px; display: flex; flex-direction: column; align-items: center; gap: 2px; margin-top: 4px; }
</style>
